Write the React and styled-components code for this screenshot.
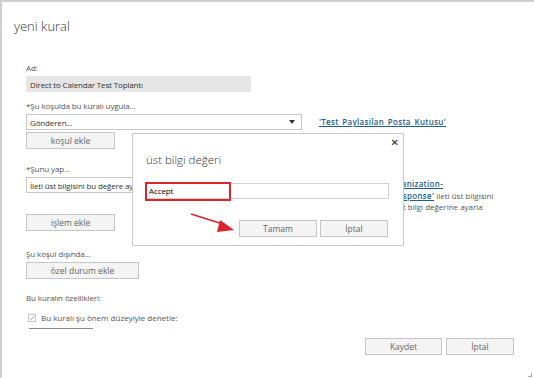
import React from "react";
import styled, { createGlobalStyle } from "styled-components";

const GlobalStyle = createGlobalStyle`
  html, body {
    margin: 0;
    padding: 0;
    background: #ffffff;
  }
  body {
    font-family: "Open Sans", "Noto Sans", sans-serif;
    color: #333333;
  }
`;

const Page = styled.div`
  position: relative;
  width: 534px;
  height: 378px;
  box-sizing: border-box;
  border-top: 2px solid #cfcfcf;
  border-left: 2px solid #cfcfcf;
  padding-bottom: 23px;
  display: flex;
  flex-direction: column;
  overflow: hidden;
`;

const Title = styled.h1`
  margin: 0;
  padding: 14px 0 0 12px;
  font-size: 13px;
  font-weight: 300;
  color: #333;
  line-height: 20px;
`;

const Form = styled.div`
  padding: 27px 0 0 24px;
  display: flex;
  flex-direction: column;
  align-items: flex-start;
`;

const Label = styled.div`
  font-size: 8px;
  line-height: 10px;
  letter-spacing: -0.1px;
  color: #555;
  margin-top: ${(p) => p.$top || 0}px;
  margin-bottom: 3px;
`;

const Row = styled.div`
  display: flex;
  align-items: flex-start;
  gap: 17px;
`;

const Field = styled.div`
  box-sizing: border-box;
  width: ${(p) => p.$width}px;
  height: 16px;
  padding: 0 6px 0 3px;
  display: flex;
  align-items: center;
  justify-content: space-between;
  font-size: 8px;
  letter-spacing: -0.15px;
  color: #333;
  background: ${(p) => (p.$filled ? "#e6e6e6" : "#fff")};
  border: 1px solid ${(p) => (p.$filled ? "#e6e6e6" : "#c8c8c8")};
  white-space: nowrap;
  overflow: hidden;
`;

const Caret = styled.span`
  width: 0;
  height: 0;
  border-left: 3px solid transparent;
  border-right: 3px solid transparent;
  border-top: 4px solid #333;
`;

const Button = styled.button`
  box-sizing: border-box;
  width: ${(p) => p.$width}px;
  height: 17px;
  margin-top: ${(p) => p.$top || 0}px;
  padding: 0;
  background: #f4f4f4;
  border: 1px solid #c6c6c6;
  font-family: inherit;
  font-size: 8.5px;
  font-weight: 400;
  color: #666;
  cursor: pointer;
`;

const Link = styled.a`
  color: #1f5f8b;
  font-weight: 600;
  text-decoration: underline;
  letter-spacing: 0.3px;
`;

const LinkSide = styled.div`
  font-size: 8px;
  line-height: 16px;
`;

const SideText = styled.div`
  width: 190px;
  font-size: 8px;
  line-height: 11.5px;
  color: #555;
  padding-top: 1px;
`;

const CheckRow = styled.div`
  display: flex;
  align-items: center;
  gap: 5px;
  margin-top: 7px;
  margin-left: 2px;
  font-size: 8px;
  line-height: 10px;
  color: #555;
`;

const Check = styled.span`
  box-sizing: border-box;
  width: 8px;
  height: 8px;
  border: 1px solid #c8c8c8;
  display: flex;
  align-items: center;
  justify-content: center;
`;

const Underline = styled.div`
  width: 64px;
  height: 1px;
  margin: 5px 0 0 3px;
  background: #8a8a8a;
`;

const Footer = styled.div`
  margin-top: auto;
  display: flex;
  justify-content: flex-end;
  gap: 4px;
  padding-right: 20px;
`;

const Dialog = styled.div`
  position: absolute;
  left: 130px;
  top: 131px;
  width: 272px;
  height: 113px;
  box-sizing: border-box;
  background: #fff;
  border: 1px solid #c9c9c9;
  padding: 17px 14px 0 13px;
  display: flex;
  flex-direction: column;
`;

const Close = styled.span`
  position: absolute;
  right: 4px;
  top: 3px;
  font-size: 10px;
  font-weight: 700;
  color: #222;
  font-family: "DejaVu Sans", sans-serif;
`;

const DialogTitle = styled.div`
  font-size: 11.5px;
  font-weight: 300;
  color: #333;
  line-height: 18px;
`;

const DialogInput = styled.div`
  position: relative;
  box-sizing: border-box;
  height: 16px;
  margin-top: 14px;
  border: 1px solid #d0d0d0;
  padding-left: 2px;
  font-size: 8px;
  letter-spacing: -0.1px;
  line-height: 14px;
  color: #000;
`;

const Highlight = styled.span`
  position: absolute;
  left: -2px;
  top: -2px;
  width: 86px;
  height: 19px;
  box-sizing: border-box;
  border: 2px solid #d8262c;
`;

const DialogButtons = styled.div`
  display: flex;
  justify-content: flex-end;
  gap: 3px;
  margin-top: 21px;
  margin-right: 1px;
`;

const Arrow = styled.svg`
  position: absolute;
  left: 188px;
  top: 210px;
  overflow: visible;
`;

const Grip = styled.span`
  position: absolute;
  right: 2px;
  bottom: 1px;
  width: 3px;
  height: 3px;
  border-right: 1px solid #aaa;
  border-bottom: 1px solid #aaa;
`;

export default function App() {
  return (
    <>
      <GlobalStyle />
      <Page>
        <Title>yeni kural</Title>
        <Form>
          <Label>Ad:</Label>
          <Field $width={225} $filled>
            Direct to Calendar Test Toplantı
          </Field>

          <Label $top={9}>*Şu koşulda bu kuralı uygula...</Label>
          <Row>
            <Field $width={276}>
              Gönderen...
              <Caret />
            </Field>
            <LinkSide>
              <Link>'Test_Paylasilan_Posta_Kutusu'</Link>
            </LinkSide>
          </Row>
          <Button $width={89} $top={2}>
            koşul ekle
          </Button>

          <Label $top={15}>*Şunu yap...</Label>
          <Row>
            <Field $width={276}>İleti üst bilgisini bu değere ayarla...</Field>
            <SideText>
              <Link>'X-MS-Exchange-Organization-</Link>
              <br />
              <Link>CalendarBooking-Response'</Link> ileti üst bilgisini
              <br />
              <Link>'Accept'</Link> olarak ileti üst bilgi değerine ayarla
            </SideText>
          </Row>
          <Button $width={89} $top={1}>
            işlem ekle
          </Button>

          <Label $top={18}>Şu koşul dışında...</Label>
          <Button $width={113}>özel durum ekle</Button>

          <Label $top={14}>Bu kuralın özellikleri:</Label>
          <CheckRow>
            <Check>
              <svg width="6" height="6" viewBox="0 0 6 6">
                <path d="M0.8 3.2 L2.3 4.6 L5.2 1" fill="none" stroke="#999" strokeWidth="0.9" />
              </svg>
            </Check>
            Bu kuralı şu önem düzeyiyle denetle:
          </CheckRow>
          <Underline />
        </Form>
        <Footer>
          <Button $width={77}>Kaydet</Button>
          <Button $width={68}>İptal</Button>
        </Footer>

        <Dialog>
          <Close>✕</Close>
          <DialogTitle>üst bilgi değeri</DialogTitle>
          <DialogInput>
            Accept
            <Highlight />
          </DialogInput>
          <DialogButtons>
            <Button $width={78}>Tamam</Button>
            <Button $width={68}>İptal</Button>
          </DialogButtons>
        </Dialog>

        <Arrow width="48" height="22" viewBox="0 0 48 22">
          <line x1="1" y1="2" x2="36" y2="13" stroke="#d8262c" strokeWidth="1.8" />
          <polygon points="44,18 30,8 27,20" fill="#d8262c" />
        </Arrow>
        <Grip />
      </Page>
    </>
  );
}
